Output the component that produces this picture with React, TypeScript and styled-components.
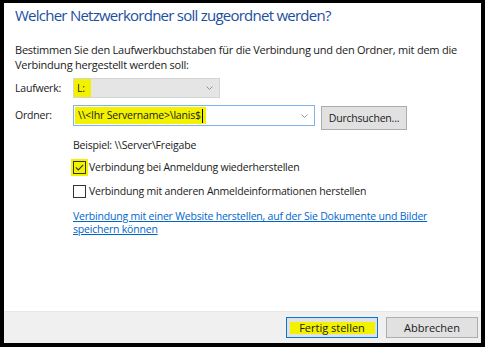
import React from 'react';
import styled, { createGlobalStyle } from 'styled-components';

const GlobalStyle = createGlobalStyle`
  html, body {
    margin: 0;
    padding: 0;
    background: #000;
  }
  body {
    font-family: "Open Sans", "Noto Sans", "Liberation Sans", sans-serif;
  }
`;

const Frame = styled.div`
  width: 485px;
  height: 347px;
  box-sizing: border-box;
  padding: 3px 4px 4px 4px;
  background: #000;
`;

const Window = styled.div`
  height: 100%;
  background: #fff;
  display: flex;
  flex-direction: column;
`;

const Content = styled.div`
  flex: 1;
  padding: 2px 10px 0 11px;
  color: #1a1a1a;
  font-size: 10.5px;
  letter-spacing: -0.2px;
`;

const Title = styled.h1`
  margin: 0;
  font-weight: 400;
  font-size: 15px;
  letter-spacing: -0.75px;
  line-height: 20px;
  color: #1c4fa0;
`;

const Intro = styled.p`
  margin: 17px 0 0;
  font-size: 11px;
  letter-spacing: -0.23px;
  line-height: 15px;
`;

const FieldRow = styled.div<{ $top: number }>`
  display: grid;
  grid-template-columns: 52px auto auto;
  align-items: start;
  justify-content: start;
  column-gap: 6px;
  margin-top: ${p => p.$top}px;
`;

const Label = styled.span`
  line-height: 20px;
`;

const Select = styled.div`
  width: 147px;
  height: 20px;
  box-sizing: border-box;
  background: #e5e5e5;
  border: 1px solid #d4d4d4;
  display: flex;
  align-items: center;
  justify-content: space-between;
  padding: 0 6px 0 0;
`;

const Combo = styled.div`
  width: 242px;
  height: 21px;
  box-sizing: border-box;
  background: #fff;
  border: 1px solid #7eb4ea;
  display: flex;
  align-items: center;
  justify-content: space-between;
  padding: 0 6px 0 1px;
`;

const Marked = styled.span<{ $full?: boolean }>`
  background: #f2f200;
  display: flex;
  align-items: center;
  height: ${p => (p.$full ? '100%' : '17px')};
  padding: 0 ${p => (p.$full ? 6 : 3)}px 0 3px;
  line-height: 15px;
`;

const Caret = styled.span`
  display: inline-block;
  width: 1px;
  height: 14px;
  background: #000;
  margin-left: 1px;
`;

const Chevron = () => (
  <svg width="7" height="4" viewBox="0 0 7 4">
    <path d="M0.5 0.5 L3.5 3.5 L6.5 0.5" fill="none" stroke="#8a8a8a" strokeWidth="0.9" />
  </svg>
);

const Button = styled.div<{ $default?: boolean }>`
  box-sizing: border-box;
  height: 24px;
  background: #e1e1e1;
  border: 1px solid ${p => (p.$default ? '#0078d7' : '#adadad')};
  display: flex;
  align-items: center;
  justify-content: center;
  color: #1a1a1a;
  font-size: 10.5px;
  letter-spacing: -0.2px;
`;

const BrowseButton = styled(Button)`
  width: 86px;
  margin-top: 1px;
`;

const Indented = styled.div`
  padding-left: 58px;
`;

const Example = styled.div`
  margin-top: 8px;
  line-height: 15px;
`;

const CheckRow = styled.label<{ $top: number }>`
  display: flex;
  align-items: center;
  gap: 3px;
  margin-top: ${p => p.$top}px;
  line-height: 15px;
`;

const Box = styled.span<{ $marked?: boolean }>`
  width: 13px;
  height: 13px;
  box-sizing: border-box;
  border: 1px solid #333;
  background: ${p => (p.$marked ? '#f2f200' : '#fff')};
  box-shadow: ${p => (p.$marked ? '0 0 0 2px #f2f200' : 'none')};
  display: flex;
  align-items: center;
  justify-content: center;
`;

const Link = styled.a`
  display: block;
  margin-top: 11px;
  color: #0066cc;
  text-decoration: underline;
  line-height: 13px;
  width: 375px;
`;

const Footer = styled.div`
  height: 32px;
  box-sizing: border-box;
  background: #f0f0f0;
  border-top: 1px solid #e8e8e8;
  display: flex;
  align-items: center;
  justify-content: flex-end;
  gap: 8px;
  padding: 0 3px 0 0;
`;

const FooterButton = styled(Button)`
  width: 92px;
  height: 21px;
  font-size: 11px;
  letter-spacing: 0;
`;

const FooterMark = styled.span`
  background: #f2f200;
  width: 85px;
  height: 12px;
  display: flex;
  align-items: center;
  justify-content: center;
  line-height: 12px;
`;

export default function App() {
  return (
    <Frame>
      <GlobalStyle />
      <Window>
        <Content>
          <Title>Welcher Netzwerkordner soll zugeordnet werden?</Title>
          <Intro>
            Bestimmen Sie den Laufwerkbuchstaben für die Verbindung und den Ordner, mit dem die
            <br />
            Verbindung hergestellt werden soll:
          </Intro>
          <FieldRow $top={6}>
            <Label>Laufwerk:</Label>
            <Select>
              <Marked $full>L:</Marked>
              <Chevron />
            </Select>
          </FieldRow>
          <FieldRow $top={7}>
            <Label>Ordner:</Label>
            <Combo>
              <Marked>
                {'\\\\<Ihr Servername>\\lanis$'}
                <Caret />
              </Marked>
              <Chevron />
            </Combo>
            <BrowseButton>Durchsuchen...</BrowseButton>
          </FieldRow>
          <Indented>
            <Example>{'Beispiel: \\\\Server\\Freigabe'}</Example>
            <CheckRow $top={7}>
              <Box $marked>
                <svg width="9" height="7" viewBox="0 0 9 7">
                  <path d="M0.8 3.4 L3.3 5.9 L8.2 0.8" fill="none" stroke="#333" strokeWidth="1.1" />
                </svg>
              </Box>
              Verbindung bei Anmeldung wiederherstellen
            </CheckRow>
            <CheckRow $top={9}>
              <Box />
              Verbindung mit anderen Anmeldeinformationen herstellen
            </CheckRow>
            <Link href="#">
              Verbindung mit einer Website herstellen, auf der Sie Dokumente und Bilder speichern können
            </Link>
          </Indented>
        </Content>
        <Footer>
          <FooterButton $default>
            <FooterMark>Fertig stellen</FooterMark>
          </FooterButton>
          <FooterButton>Abbrechen</FooterButton>
        </Footer>
      </Window>
    </Frame>
  );
}
